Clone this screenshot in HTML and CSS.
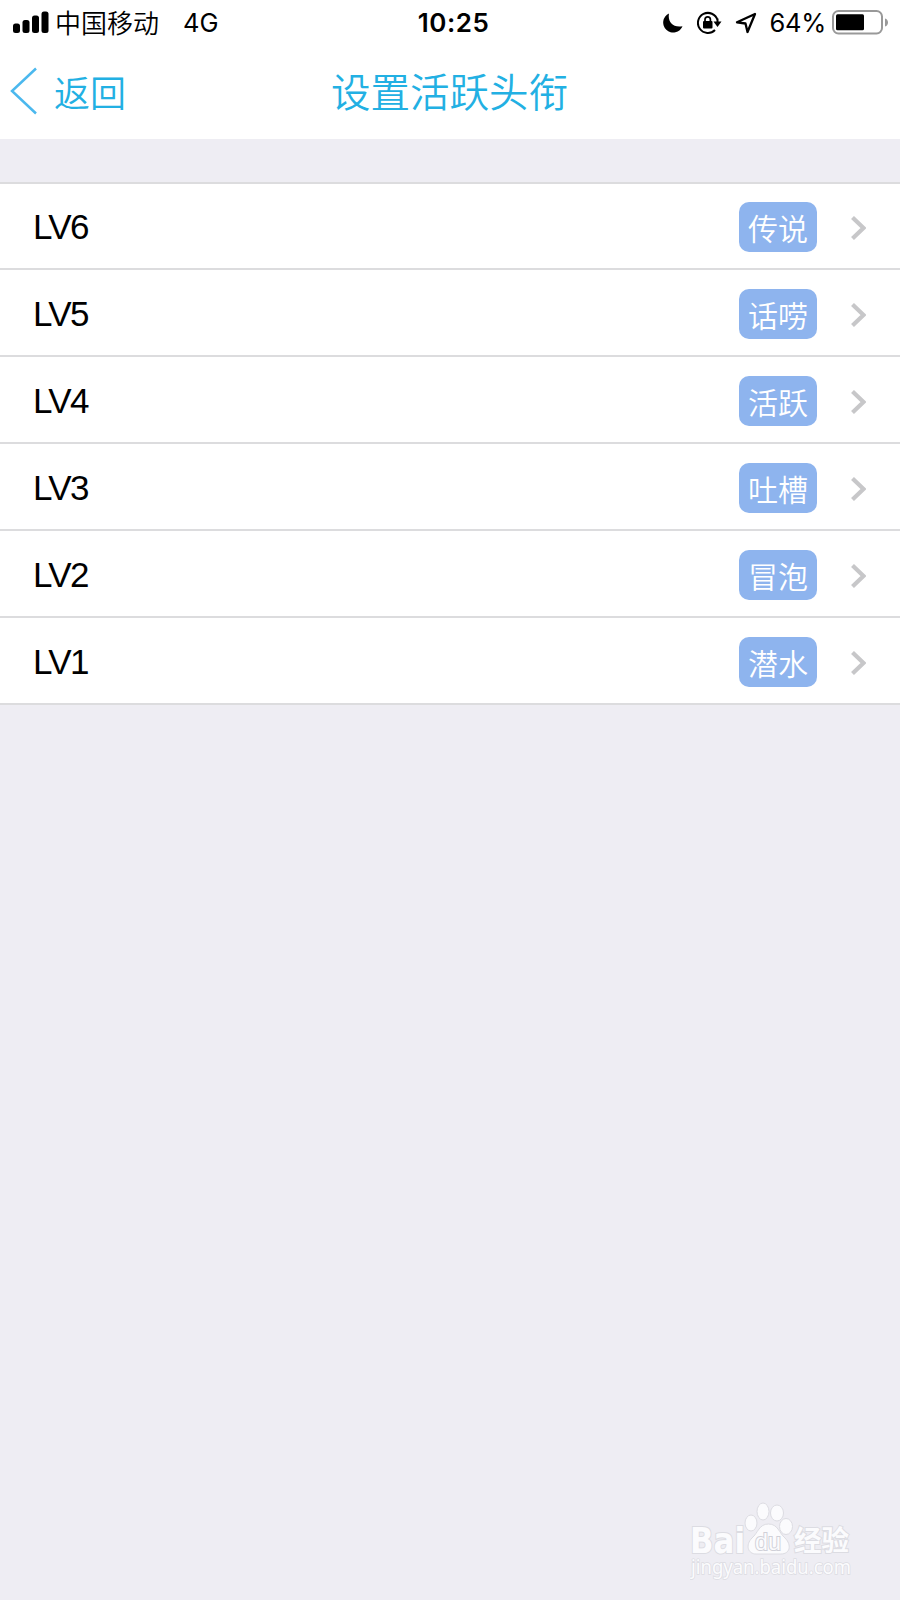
FILE: index.html
```html
<!DOCTYPE html>
<html lang="zh-CN">
<head>
    <meta charset="UTF-8">
    <meta name="viewport" content="width=device-width, initial-scale=1.0">
    <title>设置活跃头衔</title>
    <link rel="stylesheet" href="styles.css">
</head>
<body>

<div class="status-bar">
    <div class="status-left">
        <svg class="signal" width="36" height="24" viewBox="0 0 36 24">
            <rect x="0" y="12.500" width="7" height="9.500" rx="2.5"/>
            <rect x="9.500" y="9" width="7" height="13" rx="2.500"/>
            <rect x="19" y="4.500" width="7" height="17.500" rx="2.500"/>
            <rect x="28.500" y="0.500" width="7" height="21.500" rx="2.500"/>
        </svg>
        <span class="carrier">中国移动</span>
        <span class="network">4G</span>
    </div>
    <div class="time">10:25</div>
    <div class="status-right">
        <svg class="moon" width="20" height="20" viewBox="0 0 20 20">
            <path d="M6 .5C4.500 8.500 9.500 15 19.500 13.200A10 10 0 1 1 6 .5Z"/>
        </svg>
        <svg class="rotate-lock" width="25" height="24" viewBox="0 0 25 24">
            <path class="line" d="M20.500 9A10 10 0 1 0 18 19M20.500 7.500V12"/>
            <path d="M16.500 10.500h8l-4 5.500z"/>
            <rect x="6" y="10" width="9.500" height="7.500" rx="1"/>
            <path class="shackle" d="M8 11V8.500a2.700 2.700 0 0 1 5.400 0V11"/>
        </svg>
        <svg class="location" width="22" height="22" viewBox="0 0 22 22">
            <path d="M20 2L2 10.300L10.500 11.500L12.500 20Z"/>
        </svg>
        <span class="percent">64%</span>
        <svg class="battery" width="57" height="26" viewBox="0 0 57 26">
            <rect class="shell" x="1" y="1" width="49" height="22.500" rx="5.500"/>
            <rect x="4" y="4.300" width="28" height="16" rx="1.500"/>
            <path class="cap" d="M53 8.500c4 1 4 7 0 8z"/>
        </svg>
    </div>
</div>

<div class="nav-bar">
    <a class="back" href="#">
        <svg width="27" height="48" viewBox="0 0 27 48">
            <path d="M26 1.500L2 24L26 46.500"/>
        </svg>
        <span>返回</span>
    </a>
    <h1>设置活跃头衔</h1>
</div>

<ul class="level-list">
    <li>
        <span class="level">LV6</span>
        <span class="badge">传说</span>
        <svg class="arrow" width="15" height="24" viewBox="0 0 15 24"><path d="M1.500 1.500L12.500 12L1.500 22.500"/></svg>
    </li>
    <li>
        <span class="level">LV5</span>
        <span class="badge">话唠</span>
        <svg class="arrow" width="15" height="24" viewBox="0 0 15 24"><path d="M1.500 1.500L12.500 12L1.500 22.500"/></svg>
    </li>
    <li>
        <span class="level">LV4</span>
        <span class="badge">活跃</span>
        <svg class="arrow" width="15" height="24" viewBox="0 0 15 24"><path d="M1.500 1.500L12.500 12L1.500 22.500"/></svg>
    </li>
    <li>
        <span class="level">LV3</span>
        <span class="badge">吐槽</span>
        <svg class="arrow" width="15" height="24" viewBox="0 0 15 24"><path d="M1.500 1.500L12.500 12L1.500 22.500"/></svg>
    </li>
    <li>
        <span class="level">LV2</span>
        <span class="badge">冒泡</span>
        <svg class="arrow" width="15" height="24" viewBox="0 0 15 24"><path d="M1.500 1.500L12.500 12L1.500 22.500"/></svg>
    </li>
    <li>
        <span class="level">LV1</span>
        <span class="badge">潜水</span>
        <svg class="arrow" width="15" height="24" viewBox="0 0 15 24"><path d="M1.500 1.500L12.500 12L1.500 22.500"/></svg>
    </li>
</ul>

<div class="watermark">
    <svg width="170" height="90" viewBox="0 0 170 90">
        <text class="brand" x="0" y="56" textLength="55" lengthAdjust="spacingAndGlyphs">Bai</text>
        <ellipse cx="61" cy="26" rx="6" ry="8"/>
        <ellipse cx="73" cy="14.500" rx="6" ry="8.500"/>
        <ellipse cx="87" cy="16" rx="6.500" ry="8"/>
        <ellipse cx="96" cy="29.500" rx="6.500" ry="8"/>
        <path d="M78.500 27C69 27 68 36 62 41C55 48 58 57 66 57H91C100 57 102 48 95 41C89 36 88 27 78.500 27Z"/>
        <text class="du" x="65" y="52.500" textLength="26" lengthAdjust="spacingAndGlyphs">du</text>
        <text class="jingyan" x="104" y="54" textLength="55" lengthAdjust="spacingAndGlyphs">经验</text>
        <text class="site" x="1" y="77" textLength="160" lengthAdjust="spacingAndGlyphs">jingyan.baidu.com</text>
    </svg>
</div>

</body>
</html>
```
FILE: styles.css
```css
* {
    box-sizing: border-box;
}
body {
    margin: 0;
    height: 1600px;
    display: flex;
    flex-direction: column;
    background-color: #eeedf3;
    font-family: "Liberation Sans", "Noto Sans CJK SC", sans-serif;
    color: #000;
}
svg {
    display: block;
    flex: none;
}
.status-bar {
    display: grid;
    grid-template-columns: 1fr auto 1fr;
    align-items: center;
    height: 45px;
    padding: 0 11px 0 13px;
    background: #fff;
    font-family: Inter, "Noto Sans CJK SC", sans-serif;
    font-size: 26px;
    line-height: 44px;
}
.status-left,
.status-right {
    display: flex;
    align-items: center;
}
.carrier {
    margin-left: 6px;
    padding-bottom: 1px;
    font-family: "Noto Sans CJK SC", sans-serif;
    font-weight: 350;
}
.network {
    margin-left: 24px;
    font-size: 25.500px;
}
.time {
    padding-left: 5px;
    font-weight: 600;
    font-size: 26px;
    letter-spacing: 0.5px;
}
.status-right {
    justify-content: flex-end;
}
.rotate-lock {
    margin-left: 14px;
}
.rotate-lock .line {
    fill: none;
    stroke: #000;
    stroke-width: 2;
}
.rotate-lock .shackle {
    fill: none;
    stroke: #000;
    stroke-width: 1.700;
}
.location {
    margin-left: 13px;
    fill: none;
    stroke: #000;
    stroke-width: 2.300;
    stroke-linejoin: round;
}
.percent {
    margin: 0 6px 0 13px;
    font-size: 25.500px;
    letter-spacing: -0.300px;
}
.battery .shell {
    fill: none;
    stroke: #999;
    stroke-width: 2;
}
.battery .cap {
    fill: #999;
}
.nav-bar {
    display: grid;
    grid-template-columns: 1fr auto 1fr;
    align-items: center;
    height: 94px;
    padding: 0 11px 2px 10px;
    background: #fff;
    color: #22b0e3;
    font-family: "Noto Sans CJK SC", sans-serif;
    font-weight: 350;
}
.back {
    display: flex;
    align-items: center;
    gap: 17px;
    color: inherit;
    font-size: 36px;
    text-decoration: none;
}
.back path {
    fill: none;
    stroke: #4bb8ee;
    stroke-width: 2.500;
}
.back span {
    padding-bottom: 1px;
}
h1 {
    margin: 0;
    padding-bottom: 4px;
    font-size: 39.500px;
    font-weight: 350;
}
.level-list {
    list-style: none;
    margin: 43px 0 0;
    padding: 0;
    border-top: 2px solid #dcdcde;
    background: #fff;
}
.level-list li {
    display: flex;
    align-items: center;
    height: 87px;
    padding: 3px 34px 0 32px;
    border-bottom: 2px solid #dcdcde;
}
.level-list li:first-child {
    height: 86px;
    padding-top: 2px;
}
.level {
    flex: 1;
    padding-left: 1px;
    font-size: 35px;
    letter-spacing: -1.600px;
}
.badge {
    width: 78px;
    height: 50px;
    border-radius: 10px;
    background: #8eb4ee;
    color: #fff;
    font-family: "Noto Sans CJK SC", sans-serif;
    font-size: 30px;
    font-weight: 350;
    line-height: 50px;
    text-align: center;
}
.arrow {
    margin: 1px 0 0 34px;
}
.arrow path {
    fill: none;
    stroke: #c7c7c9;
    stroke-width: 4.200;
}
.watermark {
    align-self: flex-end;
    margin: auto 40px 13px 0;
}
.watermark svg {
    fill: #fbfbfd;
    stroke: #dcdce2;
    stroke-width: 1;
}
.watermark text {
    stroke-width: 2;
    paint-order: stroke;
}
.watermark .brand {
    font-family: "DejaVu Sans", sans-serif;
    font-size: 35px;
    font-weight: 700;
}
.watermark .du {
    font-family: "Liberation Sans", sans-serif;
    font-size: 24px;
    stroke: #d0d0d8;
}
.watermark .jingyan {
    font-family: "Noto Sans CJK SC", sans-serif;
    font-size: 28px;
    font-weight: 700;
}
.watermark .site {
    font-family: "Noto Sans", sans-serif;
    font-size: 19px;
    stroke-width: 1.500;
}
```
